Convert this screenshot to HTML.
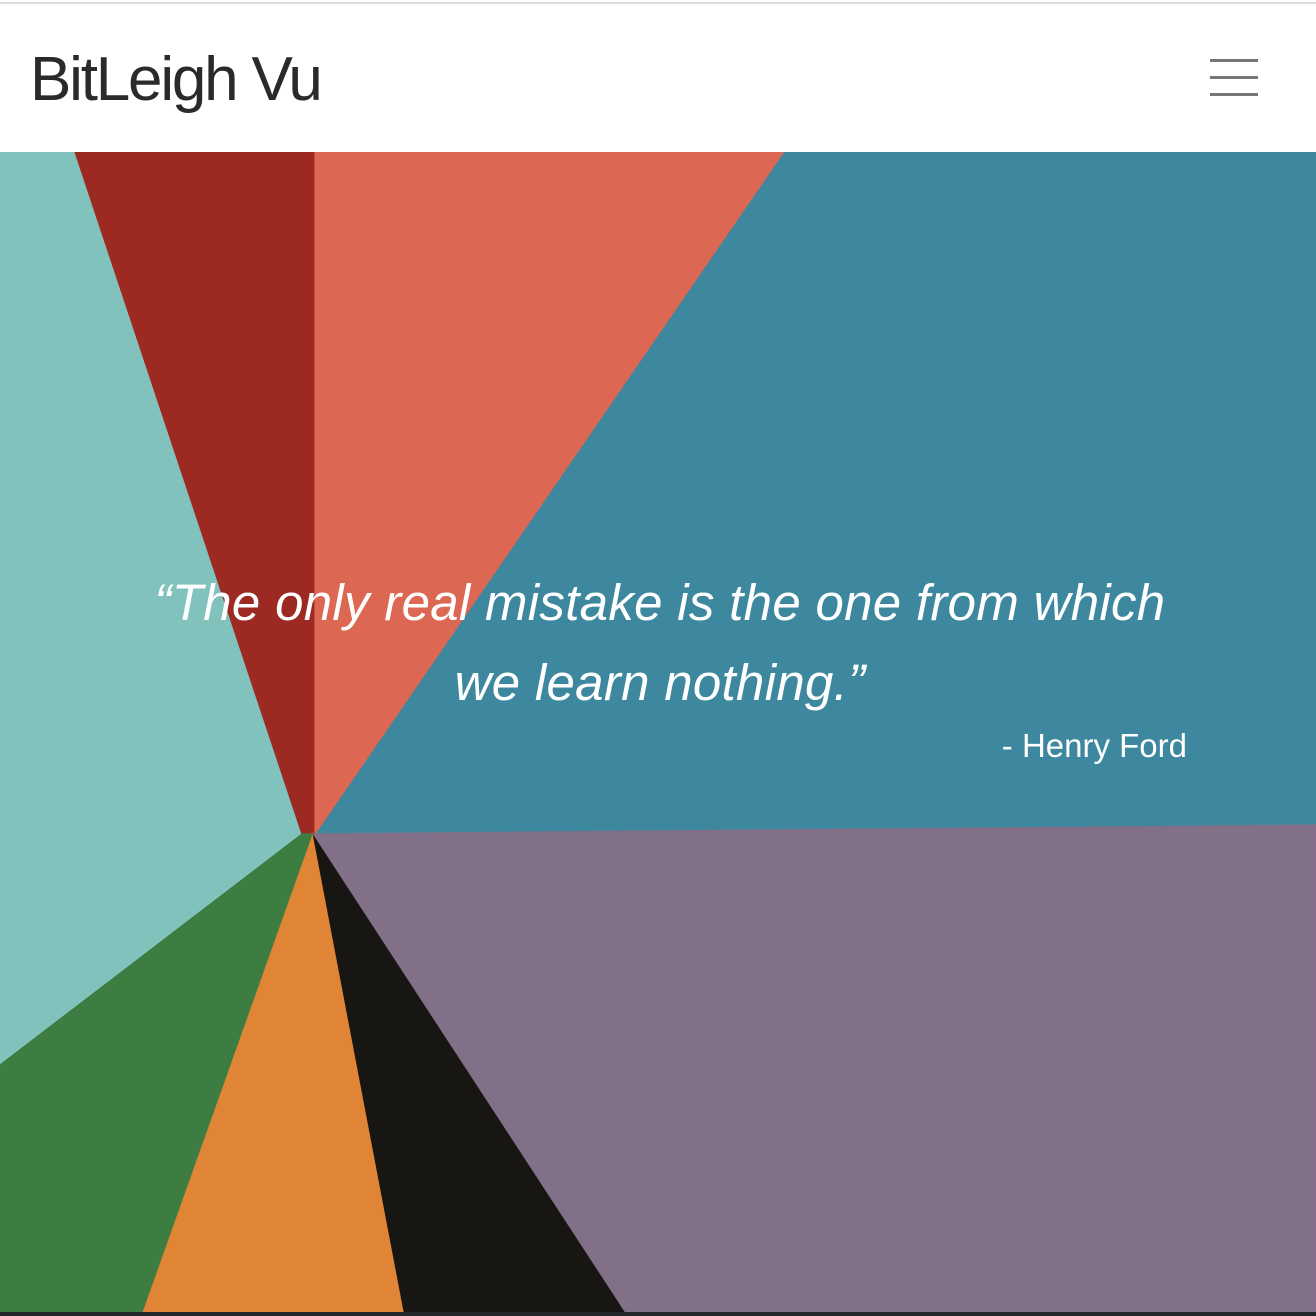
<!DOCTYPE html>
<html><head><meta charset="utf-8"><style>
html,body{margin:0;padding:0;width:1316px;height:1316px;overflow:hidden;background:#fff;font-family:"Liberation Sans",sans-serif}
.top{position:absolute;left:0;top:2px;width:1316px;height:2px;background:#dcdce0}
.logo{position:absolute;left:30px;top:42px;font-size:62px;font-weight:300;color:#2a2a2a;letter-spacing:-2.2px;line-height:76px}
.hb{position:absolute;left:1210px;width:48px;height:3px;background:#777}
svg{position:absolute;left:0;top:152px}
.q{position:absolute;left:60px;width:1200px;text-align:center;color:#fff;font-style:italic;font-size:51px;line-height:80px;top:563px;letter-spacing:0.3px}
.a{position:absolute;right:129px;top:727px;color:#fff;font-size:33px}
.bot{position:absolute;left:0;top:1312px;width:1316px;height:4px;background:#23262b}
</style></head><body>
<div class="top"></div>
<div class="logo">BitLeigh Vu</div>
<div class="hb" style="top:59px"></div><div class="hb" style="top:76px"></div><div class="hb" style="top:93px"></div>
<svg width="1316" height="1160" viewBox="0 152 1316 1160">
<rect x="0" y="152" width="1316" height="1160" fill="#4a5a48"/>
<g stroke-width="1.2">
<polygon points="0,152 75,152 302,834 0,1065" fill="#82c2bd" stroke="#82c2bd"/>
<polygon points="75,152 315,152 315,834 302,834" fill="#9c2a22" stroke="#9c2a22"/>
<polygon points="315,152 785,152 315,834" fill="#dc6853" stroke="#dc6853"/>
<polygon points="785,152 1316,152 1316,825 315,836" fill="#3d889e" stroke="#3d889e"/>
<polygon points="312,834 1316,825 1316,1312 624,1312" fill="#826f88" stroke="#826f88"/>
<polygon points="312,834 624,1312 403,1312" fill="#171612" stroke="#171612"/>
<polygon points="312,834 403,1312 142,1312" fill="#e08436" stroke="#e08436"/>
<polygon points="302,834 312,834 142,1312 0,1312 0,1065" fill="#3d7d41" stroke="#3d7d41"/>
</g>
</svg>
<div class="q">“The only real mistake is the one from which<br>we learn nothing.”</div>
<div class="a">- Henry Ford</div>
<div class="bot"></div>
</body></html>
